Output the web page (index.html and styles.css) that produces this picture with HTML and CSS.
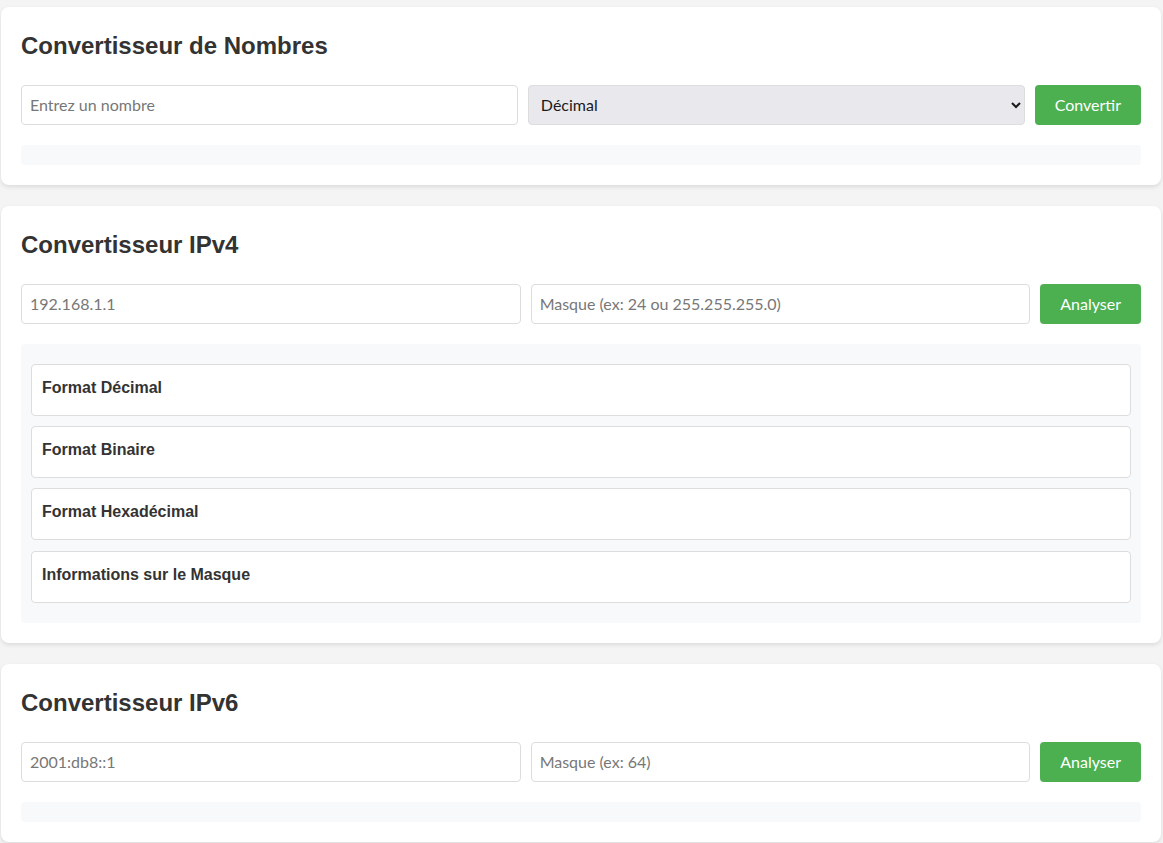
FILE: index.html
```html
<!DOCTYPE html>
<html lang="fr">
<head>
<meta charset="utf-8">
<title>Convertisseurs</title>
<link rel="stylesheet" href="styles.css">
</head>
<body>
<div class="page">
  <section class="card">
    <h2 class="card-title">Convertisseur de Nombres</h2>
    <div class="row">
      <input class="field" type="text" placeholder="Entrez un nombre">
      <select class="field select">
        <option>Décimal</option>
        <option>Binaire</option>
        <option>Hexadécimal</option>
        <option>Octal</option>
      </select>
      <button class="btn">Convertir</button>
    </div>
    <div class="result"></div>
  </section>

  <section class="card">
    <h2 class="card-title">Convertisseur IPv4</h2>
    <div class="row">
      <input class="field" type="text" placeholder="192.168.1.1">
      <input class="field" type="text" placeholder="Masque (ex: 24 ou 255.255.255.0)">
      <button class="btn">Analyser</button>
    </div>
    <div class="result">
      <div class="item"><h4 class="item-title">Format Décimal</h4></div>
      <div class="item"><h4 class="item-title">Format Binaire</h4></div>
      <div class="item"><h4 class="item-title">Format Hexadécimal</h4></div>
      <div class="item"><h4 class="item-title">Informations sur le Masque</h4></div>
    </div>
  </section>

  <section class="card">
    <h2 class="card-title">Convertisseur IPv6</h2>
    <div class="row">
      <input class="field" type="text" placeholder="2001:db8::1">
      <input class="field" type="text" placeholder="Masque (ex: 64)">
      <button class="btn">Analyser</button>
    </div>
    <div class="result"></div>
  </section>
</div>
</body>
</html>
```

FILE: styles.css
```css
html, body {
  margin: 0;
  padding: 0;
  background: #f4f4f4;
  font-family: "Liberation Sans", Arial, sans-serif;
  color: #333;
}

.page {
  display: flex;
  flex-direction: column;
  gap: 21.5px;
  padding: 7px 2px 20px 1px;
}

.card {
  background: #fff;
  border-radius: 8px;
  box-shadow: 0 2px 4px rgba(0, 0, 0, 0.1);
  padding: 20px;
}

.card-title {
  font-size: 24px;
  line-height: 27.6px;
  font-weight: bold;
  color: #333;
  margin: 5px 0 25px;
}

.row {
  display: flex;
  gap: 10px;
  margin-bottom: 20px;
}

.field {
  flex: 1;
  min-width: 0;
  height: 40px;
  box-sizing: border-box;
  border: 1px solid #ddd;
  border-radius: 4px;
  padding: 8px 8px;
  font-family: Lato, "Open Sans", sans-serif;
  font-size: 16px;
  color: #222;
  background: #fff;
}

.field::placeholder {
  color: #777;
}

.select {
  background: #e9e9ed;
  color: #1a1a1a;
}

.btn {
  height: 40px;
  padding: 0 20px;
  border: none;
  border-radius: 4px;
  background: #4caf50;
  color: #fff;
  font-family: Lato, "Open Sans", sans-serif;
  font-size: 16px;
  cursor: pointer;
}

.result {
  background: #f8f9fa;
  border-radius: 4px;
  padding: 10px;
  display: flex;
  flex-direction: column;
  gap: 10.3px;
}

.result:has(.item) {
  padding: 20px 10px;
}

.item {
  background: #fff;
  border: 1px solid #ddd;
  border-radius: 4px;
  padding: 10px;
}

.item-title {
  font-size: 16px;
  line-height: 20px;
  font-weight: bold;
  color: #333;
  margin: 3px 0 7px;
}
```
